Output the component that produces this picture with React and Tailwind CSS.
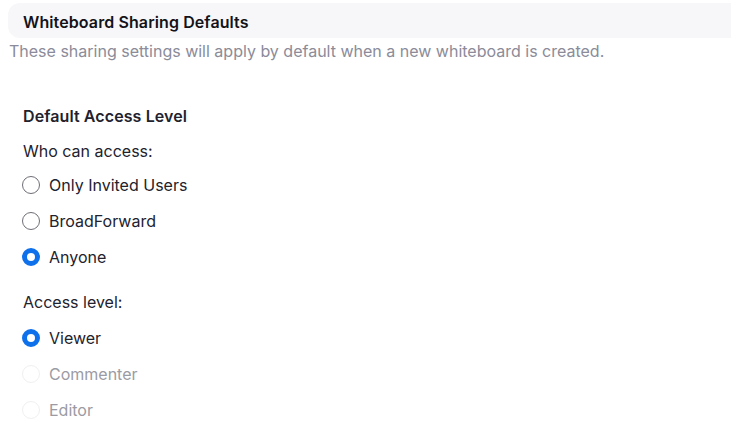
import { useState } from "react";

const FONT = { fontFamily: "Inter, 'Noto Sans', sans-serif" };

function Radio({ label, checked, disabled, onSelect }) {
  let circle = "border-[1.5px] border-[#6e6e78] bg-white";
  if (checked) circle = "border-[5px] border-[#0e71eb] bg-white";
  if (disabled) circle = "border-[1.5px] border-[#f0f0f2] bg-white";

  return (
    <div
      className={`flex items-center h-9 ${disabled ? "cursor-default" : "cursor-pointer"}`}
      onClick={() => !disabled && onSelect()}
    >
      <span className={`w-[18px] h-[18px] rounded-full shrink-0 ${circle}`} />
      <span
        className={`ml-[9px] text-[16px] leading-5 ${
          disabled ? "text-[#9b9ba3]" : "text-[#22222e]"
        }`}
      >
        {label}
      </span>
    </div>
  );
}

export default function App() {
  const [who, setWho] = useState("anyone");
  const [level, setLevel] = useState("viewer");

  return (
    <div className="w-[731px] h-[446px] bg-white overflow-hidden" style={FONT}>
      {/* Header bar */}
      <div className="ml-2 mt-[3px] h-[35px] rounded-l-xl bg-[#f7f7f9] flex items-center pl-[15px] pt-[2px]">
        <h1 className="text-[16px] font-semibold tracking-[0.1px] text-[#131319]">
          Whiteboard Sharing Defaults
        </h1>
      </div>
      <p className="ml-[9px] mt-[3px] text-[16px] leading-5 text-[#8b8b99]">
        These sharing settings will apply by default when a new whiteboard is created.
      </p>

      <div className="pl-[22px]">
        <h2 className="mt-[45px] pl-px text-[16px] leading-5 font-semibold tracking-[0.1px] text-[#22222e]">
          Default Access Level
        </h2>

        <p className="mt-[15px] pl-px text-[16px] leading-5 text-[#22222e]">Who can access:</p>
        <div className="mt-[6px] flex flex-col">
          <Radio label="Only Invited Users" checked={who === "invited"} onSelect={() => setWho("invited")} />
          <Radio label="BroadForward" checked={who === "org"} onSelect={() => setWho("org")} />
          <Radio label="Anyone" checked={who === "anyone"} onSelect={() => setWho("anyone")} />
        </div>

        <p className="mt-[17px] pl-px text-[16px] leading-5 text-[#22222e]">Access level:</p>
        <div className="mt-[8px] flex flex-col">
          <Radio label="Viewer" checked={level === "viewer"} onSelect={() => setLevel("viewer")} />
          <Radio label="Commenter" disabled />
          <Radio label="Editor" disabled />
        </div>
      </div>
    </div>
  );
}
